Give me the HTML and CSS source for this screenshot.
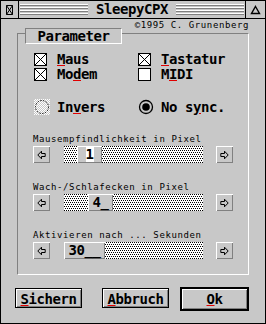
FILE: index.html
```html
<!DOCTYPE html>
<html>

<head>
    <meta http-equiv="Content-Type" content="text/html; charset=utf-8">
    <title>SleepyCPX</title>
    <link rel="stylesheet" href="styles.css">
</head>

<body>
    <div class="window">
        <div class="titlebar">
            <div class="closer">
                <svg width="9" height="12" viewBox="0 0 9 12">
                    <path d="M1.5 1.5h6v9h-6z M1.5 1.5l6 9 M7.5 1.5l-6 9" fill="none" stroke="#000" />
                </svg>
            </div>
            <div class="title">
                <span class="stripes"></span>
                <span class="title-text">SleepyCPX</span>
                <span class="stripes"></span>
            </div>
            <div class="fuller">
                <svg width="11" height="10" viewBox="0 0 11 10">
                    <path d="M5.5 1.5l4 7h-8z" fill="none" stroke="#000" stroke-width="1.4" />
                </svg>
            </div>
        </div>

        <div class="content">
            <div class="copyright">©1995 C. Grunenberg</div>

            <div class="group">
                <div class="tab">Parameter</div>

                <div class="grid checks">
                    <div class="item">
                        <svg class="box" width="13" height="13" viewBox="0 0 13 13">
                            <rect x="0.5" y="0.5" width="12" height="12" fill="#fff" stroke="#000" />
                            <path d="M1 1l11 11 M12 1l-11 11" stroke="#000" />
                        </svg>
                        <span><span class="key">M</span>aus</span>
                    </div>
                    <div class="item">
                        <svg class="box" width="13" height="13" viewBox="0 0 13 13">
                            <rect x="0.5" y="0.5" width="12" height="12" fill="#fff" stroke="#000" />
                            <path d="M1 1l11 11 M12 1l-11 11" stroke="#000" />
                        </svg>
                        <span><span class="key">T</span>astatur</span>
                    </div>
                    <div class="item">
                        <svg class="box" width="13" height="13" viewBox="0 0 13 13">
                            <rect x="0.5" y="0.5" width="12" height="12" fill="#fff" stroke="#000" />
                            <path d="M1 1l11 11 M12 1l-11 11" stroke="#000" />
                        </svg>
                        <span>Mo<span class="key">d</span>em</span>
                    </div>
                    <div class="item">
                        <svg class="box" width="13" height="13" viewBox="0 0 13 13">
                            <rect x="0.5" y="0.5" width="12" height="12" fill="#fff" stroke="#000" />
                        </svg>
                        <span>M<span class="key">I</span>DI</span>
                    </div>
                </div>

                <div class="grid radios">
                    <div class="item">
                        <span class="dither">
                            <svg width="16" height="16" viewBox="0 0 16 16">
                                <circle cx="8" cy="8" r="6.5" fill="none" stroke="#000" stroke-dasharray="1.4 1.4" />
                            </svg>
                        </span>
                        <span>In<span class="key">v</span>ers</span>
                    </div>
                    <div class="item">
                        <svg width="16" height="16" viewBox="0 0 16 16">
                            <circle cx="8" cy="8" r="6.5" fill="none" stroke="#000" stroke-width="1.3" />
                            <circle cx="8" cy="8" r="3.8" fill="#000" />
                        </svg>
                        <span>No s<span class="key">y</span>nc.</span>
                    </div>
                </div>

                <div class="slider">
                    <div class="slider-label">Mausempfindlichkeit in Pixel</div>
                    <div class="slider-row">
                        <span class="arrow">
                            <svg width="9" height="10" viewBox="0 0 9 10">
                                <path d="M0.8 5L4.5 1.2v2.3h3.7v3h-3.7v2.3z" fill="none" stroke="#000" />
                            </svg>
                        </span>
                        <div class="track">
                            <div class="knob" style="margin-left: 13px; width: 25px;"><span class="value focus">1</span></div>
                        </div>
                        <span class="arrow">
                            <svg width="9" height="10" viewBox="0 0 9 10">
                                <path d="M8.2 5L4.5 1.2v2.3h-3.7v3h3.7v2.3z" fill="none" stroke="#000" />
                            </svg>
                        </span>
                    </div>
                </div>

                <div class="slider">
                    <div class="slider-label">Wach-/Schlafecken in Pixel</div>
                    <div class="slider-row">
                        <span class="arrow">
                            <svg width="9" height="10" viewBox="0 0 9 10">
                                <path d="M0.8 5L4.5 1.2v2.3h3.7v3h-3.7v2.3z" fill="none" stroke="#000" />
                            </svg>
                        </span>
                        <div class="track">
                            <div class="knob" style="margin-left: 24px; width: 25px;"><span class="value">4_</span></div>
                        </div>
                        <span class="arrow">
                            <svg width="9" height="10" viewBox="0 0 9 10">
                                <path d="M8.2 5L4.5 1.2v2.3h-3.7v3h3.7v2.3z" fill="none" stroke="#000" />
                            </svg>
                        </span>
                    </div>
                </div>

                <div class="slider">
                    <div class="slider-label">Aktivieren nach ... Sekunden</div>
                    <div class="slider-row">
                        <span class="arrow">
                            <svg width="9" height="10" viewBox="0 0 9 10">
                                <path d="M0.8 5L4.5 1.2v2.3h3.7v3h-3.7v2.3z" fill="none" stroke="#000" />
                            </svg>
                        </span>
                        <div class="track">
                            <div class="knob" style="margin-left: 0px; width: 41px;"><span class="value">30__</span></div>
                        </div>
                        <span class="arrow">
                            <svg width="9" height="10" viewBox="0 0 9 10">
                                <path d="M8.2 5L4.5 1.2v2.3h-3.7v3h3.7v2.3z" fill="none" stroke="#000" />
                            </svg>
                        </span>
                    </div>
                </div>
            </div>

            <div class="buttons">
                <div class="btn"><span class="key">S</span>ichern</div>
                <div class="btn abbruch"><span class="key">A</span>bbruch</div>
                <div class="btn default"><span class="key">O</span>k</div>
            </div>
        </div>
    </div>
</body>
</html>
```

FILE: styles.css
```css
* {
    box-sizing: border-box;
}

body {
    margin: 0;
    font: bold 14px "DejaVu Sans Mono", monospace;
    letter-spacing: -0.43px;
    color: #000;
}

.window {
    width: 266px;
    height: 324px;
    border: 1px solid #000;
    background: #c8c8c8;
}

/* title bar */

.titlebar {
    display: flex;
    height: 18px;
    border-bottom: 1px solid #000;
}

.closer {
    width: 18px;
    border-right: 1px solid #000;
    display: flex;
    align-items: center;
    justify-content: center;
}

.title {
    flex: 1;
    display: flex;
    align-items: center;
    padding: 0 1px;
}

.stripes {
    flex: 1;
    height: 11px;
    background: repeating-linear-gradient(#fff 0 1px, #808080 1px 2px, transparent 2px 3px);
}

.title-text {
    margin: 0 8px;
    line-height: 17px;
}

.fuller {
    width: 20px;
    border-left: 1px solid #000;
    display: flex;
    align-items: center;
    justify-content: center;
}

/* content */

.content {
    padding: 1px 16px 0;
}

.copyright,
.slider-label {
    font: 9px/10px "DejaVu Sans Mono", monospace;
    letter-spacing: 0.6px;
}

.copyright {
    text-align: right;
}

.group {
    position: relative;
    margin-top: 3px;
    border-top: 1px solid #808080;
    border-left: 1px solid #808080;
    border-right: 1px solid #fff;
    border-bottom: 1px solid #fff;
    padding: 18px 0 15px 15px;
}

.tab {
    position: absolute;
    left: 7px;
    top: -6px;
    width: 97px;
    height: 16px;
    border-top: 1px solid #808080;
    border-left: 1px solid #808080;
    border-right: 1px solid #fff;
    border-bottom: 1px solid #fff;
    background: #c8c8c8;
    text-align: center;
    line-height: 14px;
}

.grid {
    display: grid;
    grid-template-columns: 104px 1fr;
    margin-left: 1px;
}

.item {
    display: flex;
    align-items: center;
    gap: 10px;
}

.checks .item {
    height: 15px;
    line-height: 15px;
}

.radios {
    margin-top: 17px;
}

.radios .item {
    height: 16px;
    line-height: 16px;
    gap: 7px;
}

.radios svg {
    display: block;
}

.dither {
    width: 16px;
    height: 16px;
    background: repeating-conic-gradient(#fff 0 25%, #c8c8c8 0 50%) 0 0 / 2px 2px;
}

.key {
    text-decoration: underline;
    text-decoration-color: #e00000;
    text-decoration-thickness: 1px;
    text-underline-offset: 1px;
}

/* sliders */

.slider {
    margin-top: 19px;
}

.slider-label {
    margin-bottom: 2px;
}

.slider-row {
    display: flex;
    height: 17px;
}

.arrow {
    width: 17px;
    height: 17px;
    background: #c8c8c8;
    box-shadow: inset 1px 1px #fff, inset -1px -1px #808080;
    display: flex;
    align-items: center;
    justify-content: center;
}

.track {
    width: 139px;
    margin: 0 13px 0 14px;
    display: flex;
    background: #fff url("data:image/svg+xml,%3Csvg xmlns='http://www.w3.org/2000/svg' width='4' height='4' shape-rendering='crispEdges'%3E%3Cpath d='M0 0h1v1H0zM2 0h1v1H2zM1 2h1v1H1zM3 2h1v1H3z'/%3E%3C/svg%3E") 0 0 / 4px 4px;
}

.knob {
    background: #c8c8c8;
    box-shadow: inset 1px 1px #fff, inset -1px -1px #808080;
    text-align: center;
    line-height: 17px;
}

.value.focus {
    background: #fff;
}

/* buttons */

.buttons {
    display: flex;
    align-items: flex-start;
    margin: 12px 0 0 -2px;
}

.btn {
    width: 68px;
    height: 20px;
    margin-top: 1px;
    border: 1px solid #000;
    box-shadow: inset 1px 1px #fff, inset -1px -1px #808080;
    text-align: center;
    line-height: 20px;
}

.abbruch {
    margin-left: 20px;
}

.default {
    width: 70px;
    height: 24px;
    margin-top: 0;
    margin-left: 11px;
    border-width: 2px;
}
```
